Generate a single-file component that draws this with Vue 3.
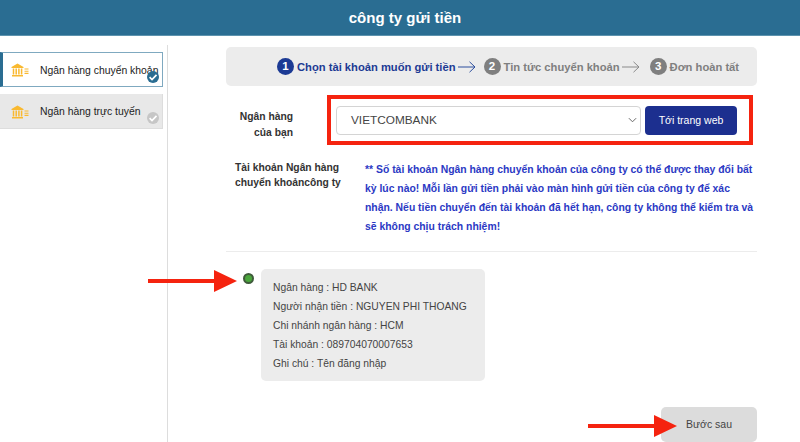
<script setup>
const infoLines = [
  'Ngân hàng : HD BANK',
  'Người nhận tiền : NGUYEN PHI THOANG',
  'Chi nhánh ngân hàng : HCM',
  'Tài khoản : 089704070007653',
  'Ghi chú : Tên đăng nhập'
]
const tabs = [
  { label: 'Ngân hàng chuyển khoản', active: true },
  { label: 'Ngân hàng trực tuyến', active: false }
]
</script>

<template>
  <div class="page">
    <header class="top">công ty gửi tiền</header>
    <div class="body">
      <aside class="side">
        <div v-for="t in tabs" :key="t.label" class="tab" :class="{ active: t.active }">
          <svg class="bank" viewBox="0 0 18 14" width="18" height="14">
            <path d="M0.5 4 L6.5 0.5 L12.5 4 V5 H0.5 Z M1 12 H12 V13.5 H1 Z" fill="#f9b930" />
            <path d="M2.5 5.5 V11.5 M5.2 5.5 V11.5 M7.9 5.5 V11.5 M10.6 5.5 V11.5" stroke="#f9b930" stroke-width="1.5" fill="none" />
            <path d="M13.5 6 H17.5 M13.5 8.2 H17.5 M13.5 10.4 H17.5" stroke="#f9b930" stroke-width="1.1" fill="none" />
          </svg>
          <span class="tab-label">{{ t.label }}</span>
          <span class="tick">
            <svg viewBox="0 0 12 12" width="12" height="12">
              <path d="M2.6 6.2 L5 8.5 L9.5 3.8" stroke="#fff" stroke-width="1.7" fill="none" />
            </svg>
          </span>
        </div>
      </aside>

      <main class="main">
        <div class="steps">
          <span class="num on">1</span>
          <span class="step-text on-text">Chọn tài khoản muốn gửi tiền</span>
          <svg class="step-arrow" viewBox="0 0 18 12" width="18" height="12">
            <path d="M0 6 H17 M11.5 0.8 L17 6 L11.5 11.2" stroke="#2d4f9e" stroke-width="1" fill="none" />
          </svg>
          <span class="num second">2</span>
          <span class="step-text">Tin tức chuyển khoản</span>
          <svg class="step-arrow" viewBox="0 0 18 12" width="18" height="12">
            <path d="M0 6 H17 M11.5 0.8 L17 6 L11.5 11.2" stroke="#8a8a8a" stroke-width="1" fill="none" />
          </svg>
          <span class="num third">3</span>
          <span class="step-text">Đơn hoàn tất</span>
        </div>

        <div class="bank-row">
          <div class="bank-label">Ngân hàng<br />của bạn</div>
          <div class="red-box">
            <div class="select">
              <span>VIETCOMBANK</span>
              <svg viewBox="0 0 10 6" width="9" height="6">
                <path d="M1 1 L5 5 L9 1" stroke="#666" stroke-width="1.1" fill="none" />
              </svg>
            </div>
            <div class="go">Tới trang web</div>
          </div>
        </div>

        <div class="note-row">
          <div class="note-label">Tài khoản Ngân hàng<br />chuyển khoảncông ty</div>
          <p class="note">** Số tài khoản Ngân hàng chuyển khoản của công ty có thể được thay đổi bất kỳ lúc nào! Mỗi lần gửi tiền phải vào màn hình gửi tiền của công ty để xác nhận. Nếu tiền chuyển đến tài khoản đã hết hạn, công ty không thể kiểm tra và sẽ không chịu trách nhiệm!</p>
        </div>

        <div class="divider"></div>

        <div class="account">
          <span class="radio"></span>
          <div class="card">
            <div v-for="l in infoLines" :key="l" class="card-line">{{ l }}</div>
          </div>
        </div>

        <div class="actions">
          <div class="next">Bước sau</div>
        </div>
      </main>
    </div>

    <svg class="mark mark-a" viewBox="0 0 89 22" width="89" height="22">
      <path d="M0 9 H66 V0 L89 11 L66 22 V13 H0 Z" fill="#f5230f" />
    </svg>
    <svg class="mark mark-b" viewBox="0 0 89 22" width="89" height="22">
      <path d="M0 9 H66 V0 L89 11 L66 22 V13 H0 Z" fill="#f5230f" />
    </svg>
  </div>
</template>

<style scoped>
.page {
  position: relative;
  width: 800px;
  height: 442px;
  overflow: hidden;
  background: #fff;
  font-family: "Liberation Sans", Arial, sans-serif;
  color: #333;
}
.top {
  height: 36px;
  background: #2a6d92;
  border-bottom: 1px solid #5d93ae;
  box-sizing: border-box;
  color: #fff;
  font-size: 15px;
  font-weight: 700;
  line-height: 35px;
  text-align: center;
  padding-left: 10px;
}
.body {
  display: flex;
  height: 406px;
}
.side {
  width: 168px;
  box-sizing: border-box;
  margin-top: 9px;
  padding-top: 7px;
  padding-right: 4px;
  border-right: 1px solid #ddd;
  display: flex;
  flex-direction: column;
  gap: 7px;
}
.tab {
  position: relative;
  height: 35px;
  box-sizing: border-box;
  display: flex;
  align-items: center;
  background: #e8e8e8;
  padding-left: 11px;
  font-size: 10.4px;
  color: #222;
  border-bottom: 1px solid #ddd;
  border-right: 1px solid #ddd;
}
.tab.active {
  background: #fff;
  border: 1px solid #7fa9c0;
  border-left: 3px solid #2a6d92;
  padding-left: 8px;
}
.bank {
  flex: none;
  margin: 1px 11px 0 0;
}
.tab-label {
  white-space: nowrap;
  margin-top: 1px;
}
.tick {
  position: absolute;
  right: 3px;
  bottom: 4px;
  width: 12px;
  height: 12px;
  border-radius: 50%;
  background: #c6c6c6;
}
.tab.active .tick {
  bottom: 3px;
  background: #2a6d92;
}
.tick svg {
  display: block;
}
.main {
  width: 531px;
  margin-left: 58px;
}
.steps {
  margin-top: 11px;
  height: 39px;
  background: #ececec;
  border-radius: 5px;
  display: flex;
  align-items: center;
  padding-left: 51px;
  font-size: 11.2px;
  font-weight: 700;
  color: #7f7f7f;
}
.num {
  width: 17px;
  height: 17px;
  border-radius: 50%;
  background: #7f7f7f;
  color: #fff;
  font-size: 11.5px;
  line-height: 17px;
  text-align: center;
  margin-right: 3px;
  flex: none;
}
.num.on {
  background: #1c3a94;
}
.num.second {
  margin-left: 8px;
}
.num.third {
  margin-left: 10px;
}
.step-text {
  white-space: nowrap;
}
.on-text {
  color: #1c3a94;
}
.step-arrow {
  margin-left: 2px;
  flex: none;
}
.bank-row {
  display: flex;
  align-items: center;
  margin-top: 9px;
}
.bank-label {
  width: 67px;
  text-align: right;
  font-size: 10.3px;
  font-weight: 700;
  line-height: 16px;
  color: #333;
  margin-top: 10px;
}
.red-box {
  margin-left: 34px;
  width: 426px;
  height: 50px;
  box-sizing: border-box;
  border: 4px solid #f5230f;
  display: flex;
  align-items: center;
  padding-left: 5px;
}
.select {
  width: 305px;
  height: 29px;
  box-sizing: border-box;
  border: 1px solid #d4d4d4;
  border-radius: 4px;
  display: flex;
  align-items: center;
  justify-content: space-between;
  padding: 0 3px 0 14px;
  font-size: 11.8px;
  color: #444;
}
.go {
  width: 92px;
  height: 29px;
  margin-left: 4px;
  background: #1c2f8f;
  border-radius: 4px;
  color: #fff;
  font-size: 10.5px;
  line-height: 29px;
  text-align: center;
}
.note-row {
  display: flex;
  margin-top: 15px;
}
.note-label {
  width: 110px;
  flex: none;
  margin-left: 9px;
  font-size: 10.3px;
  font-weight: 700;
  line-height: 15px;
  color: #333;
  white-space: nowrap;
}
.note {
  margin: 0 0 0 20px;
  width: 388px;
  font-size: 10.4px;
  font-weight: 700;
  line-height: 19px;
  color: #2b39c4;
}
.divider {
  height: 1px;
  background: #ececec;
  margin-top: 15px;
}
.account {
  display: flex;
  margin-top: 17px;
}
.radio {
  width: 7px;
  height: 7px;
  margin: 4px 0 0 17px;
  border-radius: 50%;
  background: #4aa63c;
  border: 2px solid #3e5a3a;
  flex: none;
}
.card {
  margin-left: 7px;
  width: 224px;
  height: 112px;
  box-sizing: border-box;
  padding: 9px 12px;
  background: #ececec;
  border-radius: 5px;
  font-size: 10.3px;
  color: #444;
}
.card-line {
  line-height: 19px;
  white-space: nowrap;
}
.actions {
  display: flex;
  justify-content: flex-end;
  margin-top: 26px;
}
.next {
  width: 96px;
  height: 35px;
  background: #dcdcdc;
  border-radius: 5px;
  font-size: 10.5px;
  line-height: 35px;
  text-align: center;
  color: #444;
}
.mark {
  position: absolute;
  display: block;
}
.mark-a {
  left: 148px;
  top: 270px;
}
.mark-b {
  left: 588px;
  top: 415px;
}
</style>
